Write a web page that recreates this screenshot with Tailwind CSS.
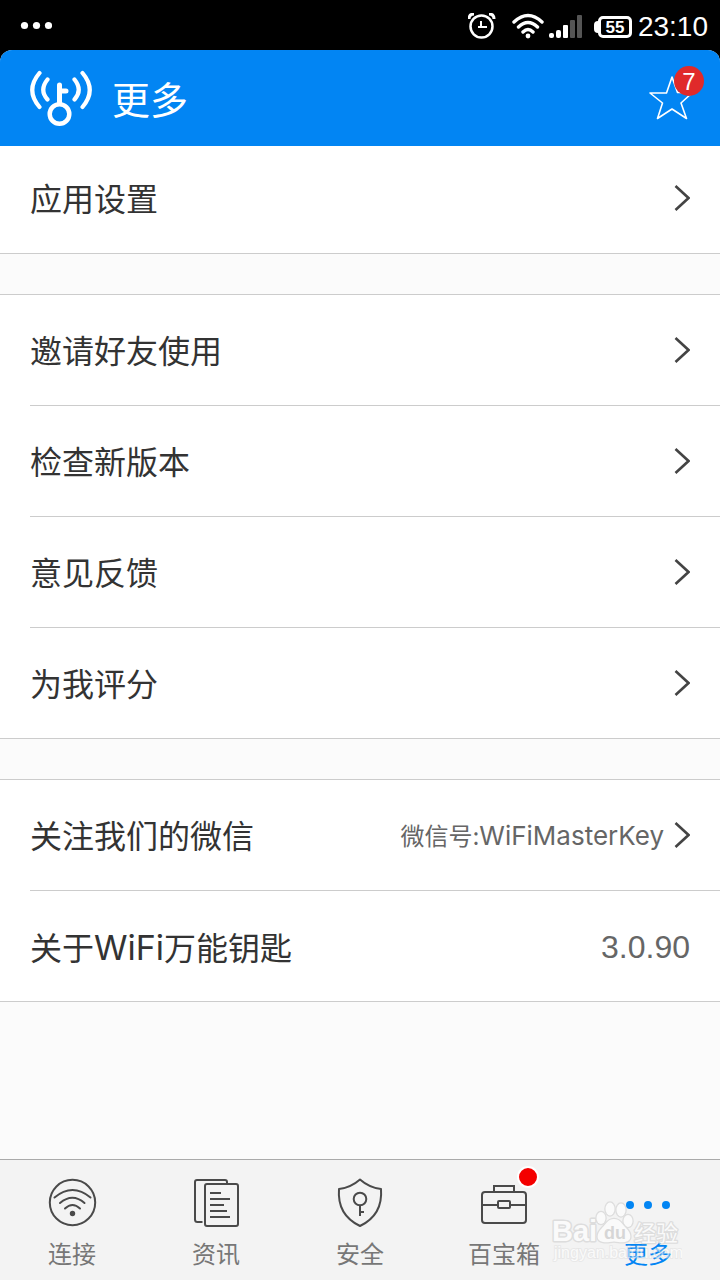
<!DOCTYPE html>
<html lang="zh-CN">
<head>
    <meta charset="UTF-8">
    <meta name="viewport" content="width=device-width, initial-scale=1.0">
    <title>更多</title>
    <script src="https://cdn.jsdelivr.net/npm/@tailwindcss/browser@4"></script>
</head>
<body class="flex min-h-screen flex-col bg-black font-['Inter','Noto_Sans_CJK_SC',sans-serif] text-[#333333]">

    <!-- Status bar -->
    <div class="flex h-[50px] items-center justify-between pl-5 pr-3 text-white">
        <svg class="h-8 w-8" viewBox="0 0 32 32" fill="currentColor">
            <circle cx="4.500" cy="16.500" r="3.600"/><circle cx="16.500" cy="16.500" r="3.600"/><circle cx="28.500" cy="16.500" r="3.600"/>
        </svg>
        <div class="flex items-center pt-1">
            <!-- alarm -->
            <svg class="mr-4 h-7 w-7" viewBox="0 0 28 28" fill="none" stroke="currentColor" stroke-width="2.500">
                <circle cx="13.500" cy="13.500" r="11"/>
                <path d="M13 8v6h6M10 14h3" stroke-width="2"/>
                <path d="M1 6Q1 1 6 1M21 1Q26 1 26 6" stroke-width="3"/>
            </svg>
            <!-- wifi -->
            <svg class="mr-1 h-7 w-8" viewBox="0 0 32 28" fill="none" stroke="currentColor" stroke-width="3.400" stroke-linecap="round">
                <path d="M2 9Q16-4 30 9M6.500 14Q16 5 25.500 14M11 19Q16 14 21 19"/>
                <circle cx="16" cy="23" r="2.400" fill="currentColor" stroke="none"/>
            </svg>
            <!-- signal -->
            <svg class="mr-3 h-7 w-[34px]" viewBox="0 0 34 28" fill="currentColor">
                <rect x="1" y="20" width="5" height="5" rx="2"/>
                <rect x="8" y="17" width="5" height="8" rx="2"/>
                <rect x="15" y="12" width="5" height="13" rx="1"/>
                <rect x="22" y="7" width="5" height="18" rx="1" fill="#555"/>
                <rect x="29" y="2" width="5" height="23" rx="1" fill="#555"/>
            </svg>
            <!-- battery -->
            <div class="mr-1.5 flex items-center">
                <div class="h-3 w-1 rounded-l bg-white"></div>
                <div class="flex h-[22px] w-[34px] items-center justify-center rounded-[5px] border-3 border-white font-['Liberation_Sans',sans-serif] text-[17px] leading-none font-bold">55</div>
            </div>
            <span class="font-['Liberation_Sans',sans-serif] text-[28px] leading-8">23:10</span>
        </div>
    </div>

    <!-- App window -->
    <div class="flex grow flex-col overflow-hidden rounded-t-xl bg-[#fbfbfb]">

        <header class="flex h-24 items-center justify-between bg-[#0285f3] pl-7 pr-4 text-white">
            <div class="flex items-center gap-[18px]">
                <svg class="h-16 w-[66px]" viewBox="0 0 66 64" fill="none" stroke="currentColor" stroke-width="4.200" stroke-linecap="round">
                    <path d="M11.500 7Q-3 24 11.500 41M19.500 13.500Q11 24 19.500 33.500M54.500 7Q69 24 54.500 41M46.500 13.500Q55 24 46.500 33.500"/>
                    <circle cx="31.500" cy="48" r="9.800" stroke-width="4.500"/>
                    <path d="M31.500 37V19M33 25h5" stroke-width="5"/>
                </svg>
                <h1 class="pt-1 text-[38px] leading-[48px]">更多</h1>
            </div>
            <button type="button" aria-label="收藏" class="relative flex h-16 w-14 items-center">
                <svg class="h-11 w-[46px]" viewBox="0 0 46 44" fill="none" stroke="currentColor" stroke-width="1.600" stroke-linejoin="round">
                    <path d="M24 1l5.500 15.500h15L33 27l5.500 15.500L24 33 9.500 42.500 14.500 27 2 17h16.500z"/>
                </svg>
                <span class="absolute right-0 top-0 flex h-[30px] w-[30px] items-center justify-center rounded-full bg-[#e02a2a] pt-0.5 font-['Liberation_Sans',sans-serif] text-2xl leading-none">7</span>
            </button>
        </header>

        <main class="flex flex-col gap-10 text-[32px] leading-[48px]">
            <ul class="border-b border-[#cccccc] bg-white">
                <li>
                    <a href="#" class="flex h-[107px] items-center justify-between px-[30px] pb-1">
                        <span class="pt-1">应用设置</span>
                        <svg class="h-7 w-4" viewBox="0 0 16 28" fill="none" stroke="#444" stroke-width="2.600"><path d="M1.500 2l13 12-13 12"/></svg>
                    </a>
                </li>
            </ul>

            <ul class="border-y border-[#cccccc] bg-white pl-[30px]">
                <li class="border-b border-[#cccccc]">
                    <a href="#" class="flex h-[110px] items-center justify-between pr-[30px]">
                        <span class="pt-1">邀请好友使用</span>
                        <svg class="h-7 w-4" viewBox="0 0 16 28" fill="none" stroke="#444" stroke-width="2.600"><path d="M1.500 2l13 12-13 12"/></svg>
                    </a>
                </li>
                <li class="border-b border-[#cccccc]">
                    <a href="#" class="flex h-[110px] items-center justify-between pr-[30px]">
                        <span class="pt-1">检查新版本</span>
                        <svg class="h-7 w-4" viewBox="0 0 16 28" fill="none" stroke="#444" stroke-width="2.600"><path d="M1.500 2l13 12-13 12"/></svg>
                    </a>
                </li>
                <li class="border-b border-[#cccccc]">
                    <a href="#" class="flex h-[110px] items-center justify-between pr-[30px]">
                        <span class="pt-1">意见反馈</span>
                        <svg class="h-7 w-4" viewBox="0 0 16 28" fill="none" stroke="#444" stroke-width="2.600"><path d="M1.500 2l13 12-13 12"/></svg>
                    </a>
                </li>
                <li>
                    <a href="#" class="flex h-[110px] items-center justify-between pr-[30px]">
                        <span class="pt-1">为我评分</span>
                        <svg class="h-7 w-4" viewBox="0 0 16 28" fill="none" stroke="#444" stroke-width="2.600"><path d="M1.500 2l13 12-13 12"/></svg>
                    </a>
                </li>
            </ul>

            <ul class="border-y border-[#cccccc] bg-white pl-[30px]">
                <li class="border-b border-[#cccccc]">
                    <a href="#" class="flex h-[110px] items-center justify-between pr-[30px]">
                        <span class="pt-1">关注我们的微信</span>
                        <span class="flex items-center gap-2.5">
                            <span class="pt-0.5 text-2xl text-[#666666]">微信号:<span class="text-[26px]">WiFiMasterKey</span></span>
                            <svg class="h-7 w-4" viewBox="0 0 16 28" fill="none" stroke="#444" stroke-width="2.600"><path d="M1.500 2l13 12-13 12"/></svg>
                        </span>
                    </a>
                </li>
                <li>
                    <a href="#" class="flex h-[110px] items-center justify-between pr-[30px]">
                        <span class="pt-1">关于<span class="text-[34px]">WiFi</span>万能钥匙</span>
                        <span class="pt-0.5 font-['Liberation_Sans',sans-serif] text-[#666666]">3.0.90</span>
                    </a>
                </li>
            </ul>
        </main>

        <!-- Tab bar -->
        <nav class="relative mt-auto grid h-[121px] grid-cols-5 border-t border-[#aaaaaa] bg-[#f3f3f3] text-2xl leading-8 text-[#777777]">
            <a href="#" class="flex flex-col items-center gap-[11px] pt-[18px]">
                <svg class="h-[50px] w-[50px]" viewBox="0 0 50 50" fill="none" stroke="#4a4a4a" stroke-width="2" stroke-linecap="round">
                    <circle cx="25.500" cy="24.500" r="22.700"/>
                    <path d="M7.500 19.500Q25.500 4.500 43.500 19.500M13 25Q25.500 14.500 37.500 25M18 30.500Q25.500 23.500 33 30.500"/>
                    <circle cx="25.500" cy="35.500" r="2.700" fill="#4a4a4a" stroke="none"/>
                </svg>
                连接
            </a>
            <a href="#" class="flex flex-col items-center gap-[11px] pt-[18px]">
                <svg class="h-[50px] w-[50px]" viewBox="0 0 50 50" fill="none" stroke="#4a4a4a" stroke-width="2">
                    <path d="M11.500 44H6.500a2.500 2.500 0 0 1-2.500-2.500V4a2 2 0 0 1 2-2h28a2 2 0 0 1 2 2v2"/>
                    <rect x="14" y="6" width="33" height="42" rx="2"/>
                    <path d="M19 15h11M19 21h20M19 27h14M19 33h17M19 39h20"/>
                </svg>
                资讯
            </a>
            <a href="#" class="flex flex-col items-center gap-[11px] pt-[18px]">
                <svg class="h-[50px] w-[50px]" viewBox="0 0 50 50" fill="none" stroke="#4a4a4a" stroke-width="2" stroke-linejoin="round">
                    <path d="M25 1.500Q34 9.500 46 11Q48 37 25 48Q2 37 4 11Q16 9.500 25 1.500z"/>
                    <circle cx="25" cy="21" r="6.300"/>
                    <path d="M25 27.500V38M25 34h4"/>
                </svg>
                安全
            </a>
            <a href="#" class="relative flex flex-col items-center gap-[11px] pt-[18px]">
                <svg class="h-[50px] w-[50px]" viewBox="0 0 50 50" fill="none" stroke="#4a4a4a" stroke-width="2">
                    <rect x="3" y="14" width="44" height="31" rx="3"/>
                    <path d="M15 14V8h20v6M3 27h16M31 27h16"/>
                    <rect x="19" y="23" width="12" height="7" rx="1"/>
                </svg>
                百宝箱
                <span class="absolute right-[37px] top-1.5 h-[22px] w-[22px] rounded-full border-2 border-white bg-[#f40000]"></span>
            </a>
            <a href="#" class="flex flex-col items-center gap-[11px] pt-[18px] text-[#0285f3]">
                <svg class="h-[50px] w-[50px]" viewBox="0 0 50 50" fill="currentColor">
                    <circle cx="7" cy="27" r="4"/><circle cx="25" cy="27" r="4"/><circle cx="43" cy="27" r="4"/>
                </svg>
                更多
            </a>

            <!-- Watermark -->
            <svg class="pointer-events-none absolute bottom-3 right-[38px] h-[70px] w-[132px] opacity-60" viewBox="0 0 132 70" fill="#ffffff" stroke="#cfcfcf" stroke-width="3" stroke-linejoin="round" paint-order="stroke" font-family="Liberation Sans, Noto Sans CJK SC, sans-serif" font-weight="bold">
                <text x="2" y="43" font-size="29">Bai</text>
                <g stroke-width="2.500">
                    <ellipse cx="51" cy="20" rx="4.500" ry="6"/>
                    <ellipse cx="60" cy="11" rx="4.500" ry="6.500"/>
                    <ellipse cx="71" cy="12" rx="4.500" ry="6.500"/>
                    <ellipse cx="78" cy="23" rx="4.500" ry="6"/>
                    <path d="M64 21c6 0 8 5 12 9 6 6 6 13-1 14-4 1-7-.500-11-.500s-7 1.500-11 .500c-7-1-7-8-1-14 4-4 6-9 12-9z"/>
                </g>
                <text x="54" y="41" font-size="18" fill="#c4c4c4" stroke="none">du</text>
                <text x="84" y="43" font-size="22" font-weight="normal" stroke-width="2.500">经验</text>
                <text x="4" y="60" font-size="16" font-weight="normal" stroke-width="2" stroke-opacity="0.500">jingyan.baidu.com</text>
            </svg>
        </nav>
    </div>

</body>
</html>
